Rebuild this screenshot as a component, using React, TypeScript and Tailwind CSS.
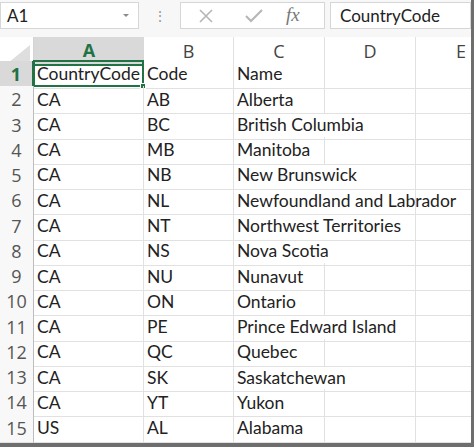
import React from 'react';

const rows: [string, string, string][] = [
  ['CountryCode', 'Code', 'Name'],
  ['CA', 'AB', 'Alberta'],
  ['CA', 'BC', 'British Columbia'],
  ['CA', 'MB', 'Manitoba'],
  ['CA', 'NB', 'New Brunswick'],
  ['CA', 'NL', 'Newfoundland and Labrador'],
  ['CA', 'NT', 'Northwest Territories'],
  ['CA', 'NS', 'Nova Scotia'],
  ['CA', 'NU', 'Nunavut'],
  ['CA', 'ON', 'Ontario'],
  ['CA', 'PE', 'Prince Edward Island'],
  ['CA', 'QC', 'Quebec'],
  ['CA', 'SK', 'Saskatchewan'],
  ['CA', 'YT', 'Yukon'],
  ['US', 'AL', 'Alabama'],
];

const cols = ['A', 'B', 'C', 'D', 'E'];
const grid = 'grid grid-cols-[34px_110px_90px_91px_91px_91px]';

export default function App() {
  return (
    <div className="w-[474px] h-[447px] overflow-hidden bg-white flex flex-col font-['Lato',sans-serif] text-[#222] border-r-[3px] border-[#6e6e6e]">
      {/* Formula bar */}
      <div className="h-[37px] shrink-0 flex items-start pt-[2px] bg-[#f7f7f7]">
        <div className="w-[139px] shrink-0 h-[27px] bg-white border border-[#d6d6d6] flex items-center justify-between pl-[6px] pr-[9px]">
          <span className="text-[17px]">A1</span>
          <svg width="6" height="4" viewBox="0 0 6 4"><path d="M0 0h6L3 3z" fill="#8a8a8a" /></svg>
        </div>
        <div className="w-[41px] shrink-0 h-[27px] flex items-center justify-center text-[#9a9a9a] text-[14px] leading-none">⋮</div>
        <div className="w-[145px] shrink-0 h-[27px] bg-white border border-[#d6d6d6] flex items-center">
          <svg className="ml-[17px]" width="16" height="16" viewBox="0 0 16 16">
            <path d="M2 2L14 14M14 2L2 14" stroke="#b5b5b5" strokeWidth="1.6" />
          </svg>
          <svg className="ml-[31px]" width="18" height="14" viewBox="0 0 18 14">
            <path d="M1 7L6 12L17 1" stroke="#b5b5b5" strokeWidth="2" fill="none" />
          </svg>
          <span className="ml-[23px] text-[19px] italic text-[#777] font-['Liberation_Serif',serif]">fx</span>
        </div>
        <div className="ml-[5px] flex-1 h-[27px] bg-white border border-[#d6d6d6] flex items-center pl-[9px]">
          <span className="text-[17px]">CountryCode</span>
        </div>
      </div>

      {/* Sheet */}
      <div className="flex-1 border-b-[4px] border-[#6e6e6e] overflow-hidden">
        <div className={`${grid} h-[24px] border-b border-[#c8c8c8]`}>
          <div className="relative bg-white border-r border-[#d4d4d4] overflow-hidden">
            <svg className="absolute right-[3px] bottom-[3px]" width="22" height="18" viewBox="0 0 22 18">
              <path d="M22 0V18H0z" fill="#dedede" />
            </svg>
          </div>
          {cols.map((c) => (
            <div
              key={c}
              className={
                c === 'A'
                  ? 'flex items-center justify-center bg-[#d9d9d9] border-b-2 border-[#217346] text-[#217346] font-bold text-[18px] font-["Open_Sans",sans-serif]'
                  : 'flex items-center justify-center bg-white border-r border-[#e1e1e1] text-[#444] text-[18px] font-["Open_Sans",sans-serif]'
              }
            >
              {c}
            </div>
          ))}
        </div>
        {rows.map((r, i) => {
          const spill = r[2].length > 8;
          return (
            <div key={i} className={`${grid} h-[25.27px] relative`}>
              <div
                className={
                  i === 0
                    ? 'flex items-center justify-center bg-[#d9d9d9] border-r-2 border-[#217346] text-[#217346] font-bold text-[18px] border-b border-b-[#c8c8c8] font-["Open_Sans",sans-serif]'
                    : 'flex items-center justify-center bg-[#f8f8f8] border-r border-[#bdbdbd] text-[#555] text-[18px] border-b border-b-[#e1e1e1] font-["Open_Sans",sans-serif]'
                }
              >
                {i + 1}
              </div>
              <div className="flex items-center pl-[3px] text-[17.5px] whitespace-nowrap overflow-hidden border-b border-r border-[#e1e1e1]">{r[0]}</div>
              <div className="flex items-center pl-[3px] text-[17.5px] whitespace-nowrap overflow-hidden border-b border-r border-[#e1e1e1]">{r[1]}</div>
              <div className={`flex items-center pl-[3px] text-[17.5px] whitespace-nowrap overflow-visible border-b border-[#e1e1e1] ${spill ? '' : 'border-r'}`}>{r[2]}</div>
              <div className="border-b border-r border-[#e1e1e1]" />
              <div className="border-b border-r border-[#e1e1e1]" />
              {i === 0 && (
                <div className="absolute left-[33px] top-[-1px] w-[111px] h-[27px] border-2 border-[#217346] pointer-events-none">
                  <div className="absolute right-[-4px] bottom-[-4px] w-[6px] h-[6px] bg-[#217346] border border-white" />
                </div>
              )}
            </div>
          );
        })}
      </div>
    </div>
  );
}
